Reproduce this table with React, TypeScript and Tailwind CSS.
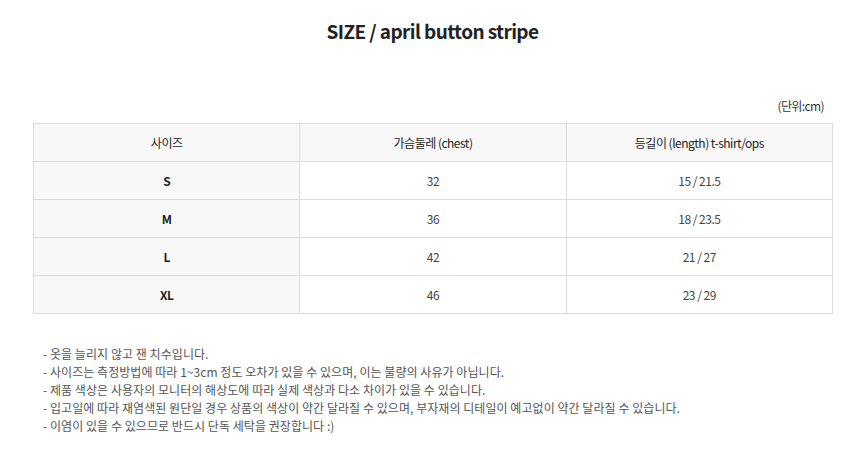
const rows = [
  { size: 'S', chest: '32', length: '15 / 21.5' },
  { size: 'M', chest: '36', length: '18 / 23.5' },
  { size: 'L', chest: '42', length: '21 / 27' },
  { size: 'XL', chest: '46', length: '23 / 29' }
];

const notes = [
  '- 옷을 늘리지 않고 잰 치수입니다.',
  '- 사이즈는 측정방법에 따라 1~3cm 정도 오차가 있을 수 있으며, 이는 불량의 사유가 아닙니다.',
  '- 제품 색상은 사용자의 모니터의 해상도에 따라 실제 색상과 다소 차이가 있을 수 있습니다.',
  '- 입고일에 따라 재염색된 원단일 경우 상품의 색상이 약간 달라질 수 있으며, 부자재의 디테일이 예고없이 약간 달라질 수 있습니다.',
  '- 이염이 있을 수 있으므로 반드시 단독 세탁을 권장합니다 :)'
];

export default function App() {
  return (
    <div className="h-[468px] w-[859px] bg-white font-['Noto_Sans_CJK_KR','Noto_Sans',sans-serif] text-[#333]">
      <h1 className="pl-[6px] pt-[17px] text-center text-[19px] font-bold leading-[28px] tracking-[-0.6px] text-[#222]">
        SIZE / april button stripe
      </h1>

      <div className="mx-[33px] mt-[52px]">
        <p className="mb-[8px] pr-[2px] text-right text-[12px] leading-[18px] tracking-[-0.6px] text-[#333]">
          (단위:cm)
        </p>
        <table className="w-[800px] table-fixed border-collapse text-[12px] tracking-[-0.5px]">
          <thead>
            <tr className="h-[38px] bg-[#f8f8f8]">
              <th className="border border-[#dcdcdc] font-normal text-[#222]">사이즈</th>
              <th className="border border-[#dcdcdc] font-normal text-[#222]">가슴둘레 (chest)</th>
              <th className="border border-[#dcdcdc] font-normal text-[#222]">
                등길이 (length) t-shirt/ops
              </th>
            </tr>
          </thead>
          <tbody>
            {rows.map((row) => (
              <tr key={row.size} className="h-[38px]">
                <td className="border border-[#dcdcdc] bg-[#f8f8f8] text-center font-bold text-[#222]">
                  {row.size}
                </td>
                <td className="border border-[#dcdcdc] text-center text-[#444]">{row.chest}</td>
                <td className="border border-[#dcdcdc] text-center text-[#444]">{row.length}</td>
              </tr>
            ))}
          </tbody>
        </table>
      </div>

      <ul className="ml-[43px] mt-[31px] text-[12px] leading-[18px] tracking-[0.05px] text-[#555]">
        {notes.map((note) => (
          <li key={note}>{note}</li>
        ))}
      </ul>
    </div>
  );
}
